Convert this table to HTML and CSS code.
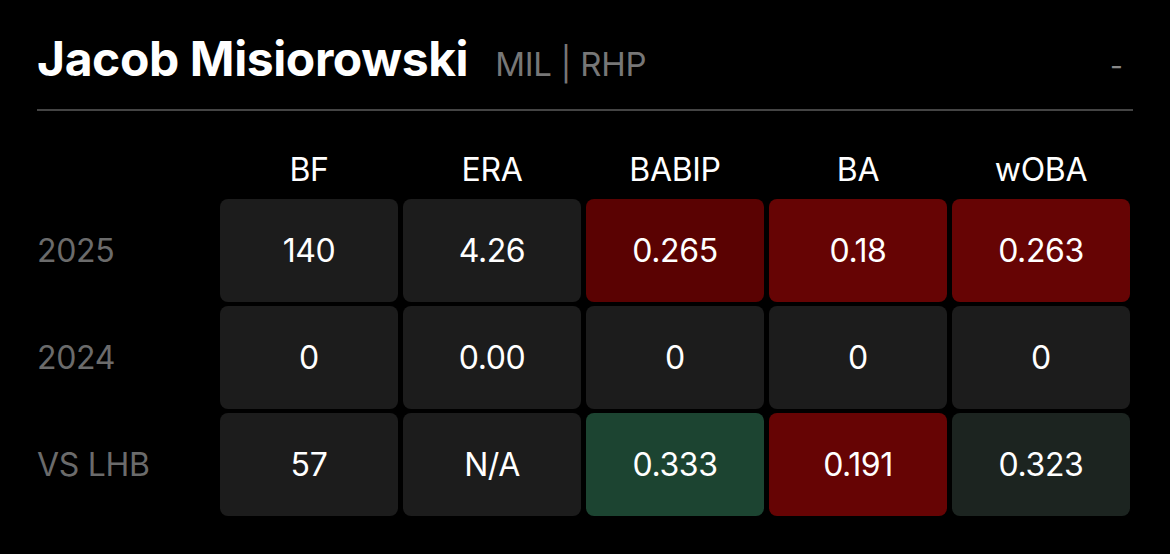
FILE: index.html
```html
<!DOCTYPE html>
<html lang="en">
<head>
<meta charset="utf-8">
<title>Jacob Misiorowski</title>
<link rel="stylesheet" href="styles.css">
</head>
<body>
<div class="card">
  <header class="head">
    <h1 class="name">Jacob Misiorowski</h1>
    <span class="meta">MIL | RHP</span>
    <span class="dash">-</span>
  </header>
  <div class="grid">
    <div class="corner"></div>
    <div class="colh">BF</div>
    <div class="colh">ERA</div>
    <div class="colh">BABIP</div>
    <div class="colh">BA</div>
    <div class="colh">wOBA</div>

    <div class="rowh">2025</div>
    <div class="cell">140</div>
    <div class="cell">4.26</div>
    <div class="cell red-dark">0.265</div>
    <div class="cell red">0.18</div>
    <div class="cell red">0.263</div>

    <div class="rowh">2024</div>
    <div class="cell">0</div>
    <div class="cell">0.00</div>
    <div class="cell">0</div>
    <div class="cell">0</div>
    <div class="cell">0</div>

    <div class="rowh">VS LHB</div>
    <div class="cell">57</div>
    <div class="cell">N/A</div>
    <div class="cell green">0.333</div>
    <div class="cell red">0.191</div>
    <div class="cell green-dim">0.323</div>
  </div>
</div>
</body>
</html>
```
FILE: styles.css
```css
html, body {
  margin: 0;
  padding: 0;
  background: #000;
}
body {
  font-family: Inter, "Noto Sans", sans-serif;
  color: #fff;
}
.card {
  padding: 0 40px 0 37px;
}
.head {
  display: flex;
  align-items: baseline;
  height: 111px;
  box-sizing: border-box;
  padding-top: 35px;
  margin-right: -3px;
  border-bottom: 2px solid #444;
}
.name {
  margin: 0;
  font-size: 48px;
  font-weight: 700;
  letter-spacing: -0.4px;
  line-height: 1;
}
.meta {
  margin-left: 27px;
  font-size: 33px;
  color: #777;
  letter-spacing: -0.3px;
}
.dash {
  margin-left: auto;
  margin-right: 10px;
  font-size: 28px;
  color: #888;
}
.grid {
  display: grid;
  grid-template-columns: 178px repeat(5, 1fr);
  grid-template-rows: 52px repeat(3, 103px);
  column-gap: 5px;
  row-gap: 4px;
  margin-top: 32px;
}
.colh {
  display: flex;
  align-items: center;
  justify-content: center;
  font-size: 32px;
  letter-spacing: -0.3px;
}
.rowh {
  display: flex;
  align-items: center;
  font-size: 32px;
  color: #6b6b6b;
  letter-spacing: -0.3px;
}
.cell {
  display: flex;
  align-items: center;
  justify-content: center;
  background: #1c1c1c;
  border-radius: 8px;
  font-size: 32px;
  letter-spacing: -0.4px;
}
.red-dark { background: #5a0202; }
.red { background: #660404; }
.green { background: #1c4431; }
.green-dim { background: #1c2420; }
```
